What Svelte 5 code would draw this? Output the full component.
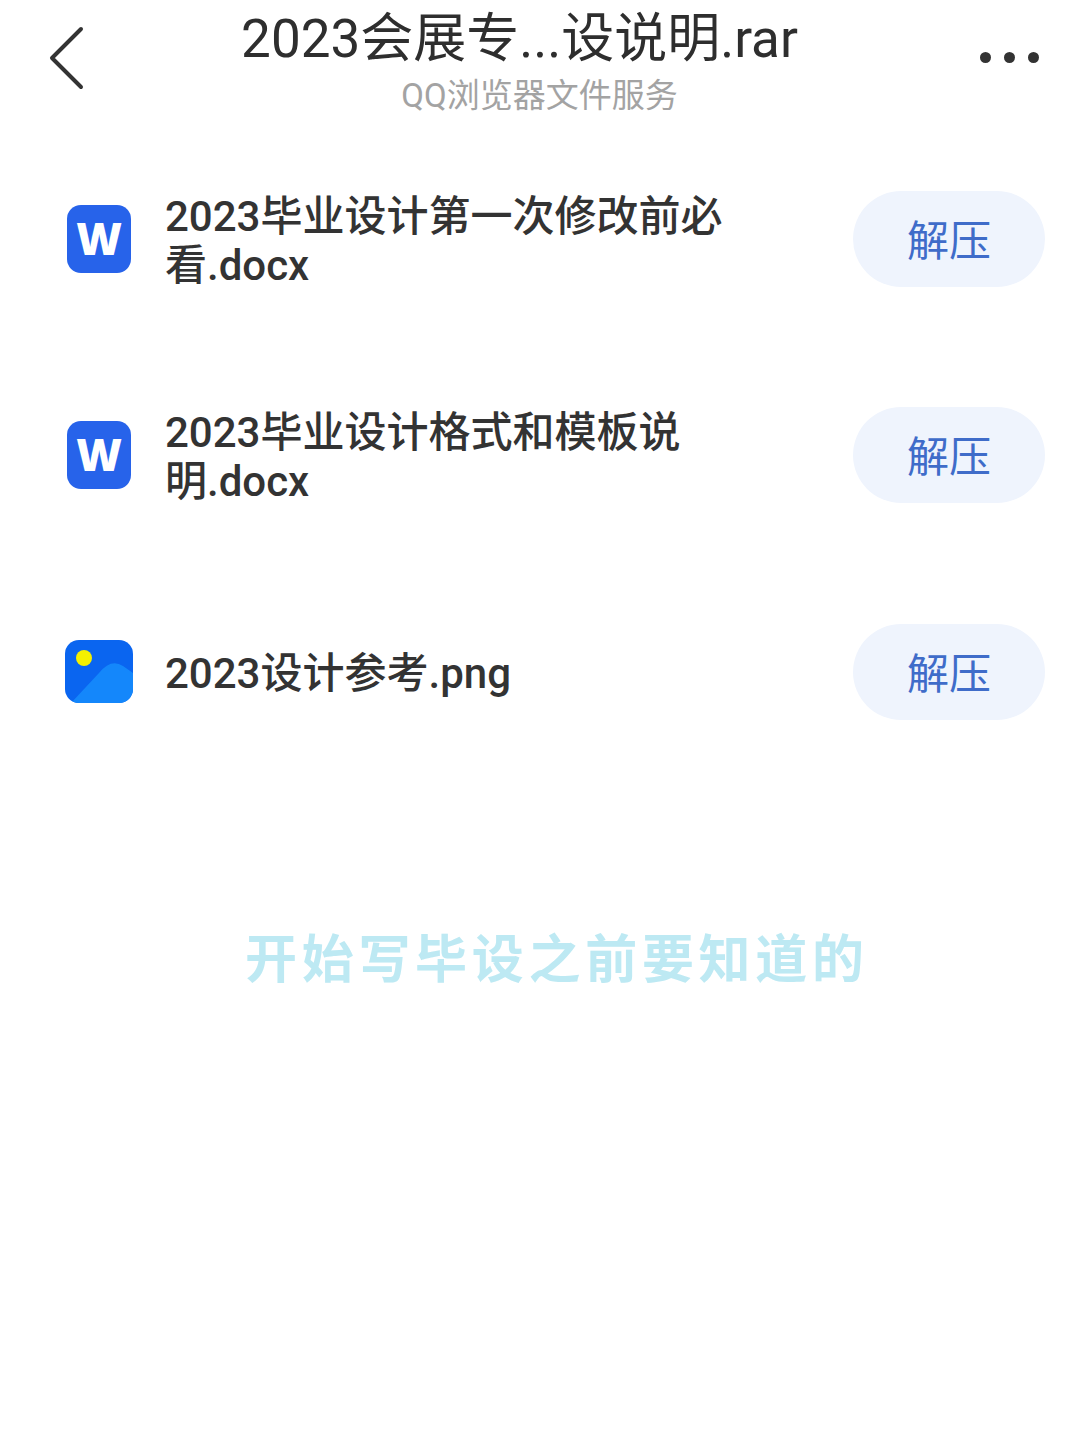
<script>
  const files = [
    { lines: ["2023毕业设计第一次修改前必", "看.docx"], icon: "word" },
    { lines: ["2023毕业设计格式和模板说", "明.docx"], icon: "word" },
    { lines: ["2023设计参考.png"], icon: "image" },
  ];
</script>

<div class="page">
  <header class="top-bar">
    <svg class="back" width="40" height="66" viewBox="0 0 40 66">
      <path d="M33 4 L4 33 L33 62" fill="none" stroke="#333" stroke-width="4" stroke-linecap="round" stroke-linejoin="round" />
    </svg>
    <div class="title-block">
      <h1 class="title">2023会展专...设说明.rar</h1>
      <p class="subtitle">QQ浏览器文件服务</p>
    </div>
    <div class="more">
      <span class="dot"></span>
      <span class="dot"></span>
      <span class="dot"></span>
    </div>
  </header>

  <ul class="file-list">
    {#each files as file}
      <li class="file-row">
        <div class="icon-slot">
          {#if file.icon === "word"}
            <div class="word-icon">W</div>
          {:else}
            <svg width="68" height="63" viewBox="0 0 68 63">
              <defs>
                <clipPath id="img-clip">
                  <rect width="68" height="63" rx="14" />
                </clipPath>
              </defs>
              <g clip-path="url(#img-clip)">
                <rect width="68" height="63" fill="#0a65f0" />
                <path d="M6 63 L34 33 Q46 18 58 26 L68 33 L68 63 Z" fill="#1487fb" />
                <circle cx="19" cy="18" r="8" fill="#f4f000" />
              </g>
            </svg>
          {/if}
        </div>
        <div class="file-name">
          {#each file.lines as line}
            <div>{line}</div>
          {/each}
        </div>
        <button class="extract">解压</button>
      </li>
    {/each}
  </ul>

  <p class="caption">开始写毕设之前要知道的</p>
</div>

<style>
  :global(body) {
    margin: 0;
    background: #fff;
  }

  .page {
    height: 1436px;
    overflow: hidden;
    font-family: Roboto, "Noto Sans CJK SC", sans-serif;
    color: #333;
  }

  .top-bar {
    height: 130.8px;
    display: flex;
    align-items: flex-start;
    padding: 0 41px 0 48px;
    box-sizing: border-box;
  }

  .back {
    flex: none;
    margin-top: 25px;
  }

  .title-block {
    flex: 1;
    text-align: center;
    padding-left: 11px;
  }

  .title {
    margin: 8px 0 0;
    padding-right: 40px;
    font-size: 53px;
    line-height: 62px;
    font-weight: 400;
    color: #2e2e2e;
    white-space: nowrap;
  }

  .subtitle {
    margin: 4px 0 0;
    font-size: 33px;
    line-height: 44px;
    color: #a3a3a3;
  }

  .more {
    flex: none;
    display: flex;
    gap: 13px;
    margin-top: 52px;
  }

  .dot {
    width: 11px;
    height: 11px;
    border-radius: 50%;
    background: #333;
  }

  .file-list {
    list-style: none;
    margin: 0;
    padding: 0;
  }

  .file-row {
    height: 216.4px;
    display: flex;
    align-items: center;
    padding: 0 35px 0 65px;
    box-sizing: border-box;
  }

  .icon-slot {
    width: 100px;
    flex: none;
    display: flex;
  }

  .word-icon {
    width: 64px;
    height: 68px;
    margin-left: 2px;
    border-radius: 14px;
    background: #2763ea;
    color: #fff;
    font-family: "Open Sans", sans-serif;
    font-size: 44px;
    font-weight: 800;
    line-height: 66px;
    text-align: center;
  }

  .file-name {
    flex: 1;
    padding-top: 4px;
    font-size: 42px;
    line-height: 49px;
    font-weight: 500;
    color: #333;
    white-space: nowrap;
  }

  .extract {
    width: 192px;
    height: 96px;
    flex: none;
    border: none;
    border-radius: 48px;
    background: #eff4fd;
    color: #3f6cc9;
    font-family: inherit;
    font-size: 42px;
    padding: 0 0 3px;
  }

  .caption {
    margin: 147px 0 0;
    padding-left: 245px;
    font-size: 52px;
    line-height: 68px;
    letter-spacing: 4.7px;
    font-weight: 700;
    color: #bde9f3;
    white-space: nowrap;
  }
</style>
